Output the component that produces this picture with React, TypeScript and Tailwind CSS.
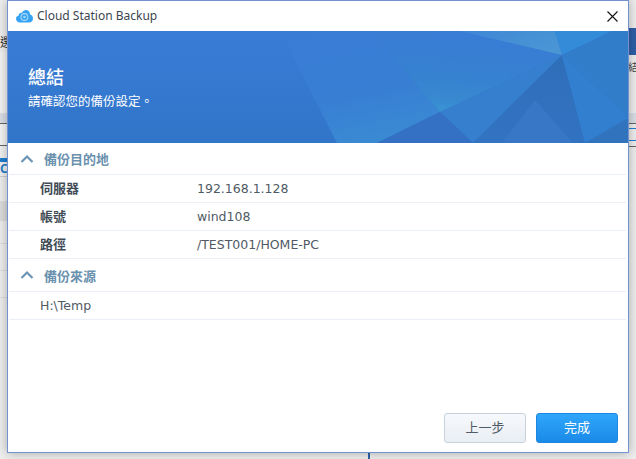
import React from 'react';

const cjk = '"Noto Sans", "Noto Sans CJK TC", sans-serif';
const mono = '"DejaVu Sans", "Noto Sans CJK TC", sans-serif';

const Chevron = () => (
    <svg width="14" height="10" viewBox="0 0 14 10" className="shrink-0" fill="none" stroke="#6c95b5" strokeWidth="2.2">
        <path d="M1.5 8 L7 2.5 L12.5 8" />
    </svg>
);

const CloudIcon = () => (
    <svg width="17" height="14" viewBox="0 0 17 14" className="shrink-0">
        <path d="M4 13.5 C1.5 13.5 0 11.8 0 9.8 C0 8 1.2 6.8 2.6 6.5 C2.8 4.4 4.4 3.4 6 3.8 C7 1.8 8.6 0.8 10.4 1 C12.6 1.3 14 3 14 5.2 C15.8 5.8 17 7.4 17 9.4 C17 11.8 15.2 13.5 13 13.5 Z" fill="#35a3f2" />
        <circle cx="8.4" cy="8" r="3.4" fill="none" stroke="#a5d8fa" strokeWidth="1.1" />
        <circle cx="8.4" cy="8" r="1.3" fill="#a5d8fa" />
    </svg>
);

const Banner = () => (
    <svg className="absolute inset-0 blur-[0.5px]" width="620" height="112" viewBox="8 31 620 112" preserveAspectRatio="none">
        <defs>
            <linearGradient id="base" x1="0" y1="0" x2="0" y2="1">
                <stop offset="0" stopColor="#397cd7" />
                <stop offset="1" stopColor="#3175c9" />
            </linearGradient>
            <linearGradient id="mid" x1="0.25" y1="0" x2="0.55" y2="1">
                <stop offset="0" stopColor="#397cd6" />
                <stop offset="0.6" stopColor="#387fd4" />
                <stop offset="1" stopColor="#3a8ad2" />
            </linearGradient>
            <linearGradient id="glow" x1="0.45" y1="0" x2="0.3" y2="1">
                <stop offset="0" stopColor="#397cd6" />
                <stop offset="0.6" stopColor="#3782d0" />
                <stop offset="0.85" stopColor="#388ad0" />
                <stop offset="1" stopColor="#3a96d3" />
            </linearGradient>
            <linearGradient id="top" x1="0" y1="0" x2="1" y2="0.6">
                <stop offset="0" stopColor="#3f86d6" />
                <stop offset="1" stopColor="#4a96d4" />
            </linearGradient>
            <linearGradient id="dark" x1="0.6" y1="0" x2="0.4" y2="1">
                <stop offset="0" stopColor="#2f6eb9" />
                <stop offset="1" stopColor="#3273c2" />
            </linearGradient>
        </defs>
        <rect x="8" y="31" width="620" height="112" fill="url(#base)" />
        <polygon points="280,31 370,31 440,112 377,143 337,143" fill="url(#mid)" />
        <polygon points="370,31 460,31 562,55 440,112" fill="url(#glow)" />
        <polygon points="460,31 555,31 562,55" fill="url(#top)" />
        <polygon points="555,31 612,31 562,55" fill="#348bd8" />
        <polygon points="612,31 628,31 628,118 562,55" fill="#317dca" />
        <polygon points="562,55 440,112 473,143" fill="#367fce" />
        <polygon points="440,112 473,143 377,143" fill="#3470c4" />
        <polygon points="562,55 473,143 585,143" fill="url(#dark)" />
        <polygon points="535,100 573,143 502,143" fill="#3877c5" />
        <polygon points="562,55 628,118 585,143" fill="#327fcf" />
        <polygon points="628,118 628,143 585,143" fill="#3174bd" />
    </svg>
);

const Row = ({ label, value }: { label: string; value: string }) => (
    <div className="flex items-center h-[28px] pl-[31px] border-b border-[#e9eff4] ml-[1px] mr-[2px]">
        <span className="w-[157px] text-[13px] font-bold text-[#414b55]">{label}</span>
        <span className="text-[12.5px] text-[#505a64] pt-[2px]" style={{ fontFamily: mono }}>{value}</span>
    </div>
);

const Section = ({ title, tall }: { title: string; tall?: boolean }) => (
    <div className={tall ? 'flex items-center h-[33px] pl-[11px] gap-[10px] border-b border-[#e9eff4] ml-[1px] mr-[2px]' : 'flex items-center h-[32px] pl-[11px] gap-[10px] border-b border-[#e9eff4] ml-[1px] mr-[2px]'}>
        <Chevron />
        <span className="text-[13px] font-bold text-[#6a91ad] pt-[3px]">{title}</span>
    </div>
);

export default function App() {
    return (
        <div className="relative w-[636px] h-[459px] overflow-hidden bg-[#eeeeee]" style={{ fontFamily: cjk }}>
            {/* desktop behind the dialog */}
            <div className="flex justify-between h-full">
                <div className="w-[7px] flex flex-col text-[12px] text-[#333] overflow-hidden">
                    <div className="h-[34px] bg-[#efefef]" />
                    <div className="h-[18px] leading-[18px] whitespace-nowrap">選</div>
                    <div className="h-[61px] bg-[#f3f3f3]" />
                    <div className="h-[10px] bg-[#d9dee6]" />
                    <div className="h-[1px] bg-[#666]" />
                    <div className="h-[21px] bg-[#f4f4f4]" />
                    <div className="h-[1px] bg-[#666]" />
                    <div className="h-[12px] bg-[#f1f1f1]" />
                    <div className="h-[4px] bg-[#1f7fd0]" />
                    <div className="h-[14px] leading-[14px] text-[#2a7fc8] font-bold bg-[#f1f1f1]">C</div>
                    <div className="h-[1px] bg-[#cfcfcf]" />
                    <div className="h-[24px]" />
                    <div className="h-[20px] bg-[#dcdcdc]" />
                    <div className="h-[22px]" />
                    <div className="h-[1px] bg-[#dcdcdc]" />
                    <div className="h-[26px]" />
                    <div className="h-[1px] bg-[#dcdcdc]" />
                    <div className="h-[26px]" />
                    <div className="h-[1px] bg-[#dcdcdc]" />
                </div>
                <div className="w-[8px] flex flex-col text-[10px] text-[#444] overflow-hidden">
                    <div className="h-[28px]" />
                    <div className="h-[27px] bg-[#2f5fa8]" />
                    <div className="h-[6px]" />
                    <div className="h-[12px] leading-[12px] whitespace-nowrap">結</div>
                    <div className="h-[40px]" />
                    <div className="h-[10px] bg-[#d9dee6]" />
                    <div className="h-[1px] bg-[#666]" />
                    <div className="h-[4px]" />
                    <div className="h-[1px] bg-[#1f7fd0]" />
                    <div className="h-[11px]" />
                    <div className="h-[1px] bg-[#1f7fd0]" />
                    <div className="h-[5px]" />
                    <div className="h-[1px] bg-[#666]" />
                </div>
            </div>
            <div className="absolute bottom-0 left-[368px] w-[2px] h-[8px] bg-[#2a65a8]" />

            {/* dialog */}
            <div className="absolute left-[7px] top-0 w-[622px] h-[453px] flex flex-col bg-white border border-[#7492cf] shadow-[0_0_10px_rgba(0,0,0,0.3)]">
                <div className="flex items-center h-[30px] pl-[8px] pr-[10px] gap-[4px] shrink-0">
                    <CloudIcon />
                    <span className="grow text-[12px] text-[#3c4650]">Cloud Station Backup</span>
                    <svg width="11" height="11" viewBox="0 0 11 11" stroke="#111" strokeWidth="1.1">
                        <path d="M0.5 0.5 L10.5 10.5 M10.5 0.5 L0.5 10.5" />
                    </svg>
                </div>
                <div className="relative h-[112px] shrink-0 overflow-hidden">
                    <Banner />
                    <div className="relative pl-[20px] pt-[33px] text-white">
                        <div className="text-[18px] leading-[27px] font-medium">總結</div>
                        <div className="text-[12.5px] leading-[18px] pt-[2px]">請確認您的備份設定。</div>
                    </div>
                </div>
                <Section title="備份目的地" />
                <Row label="伺服器" value="192.168.1.128" />
                <Row label="帳號" value="wind108" />
                <Row label="路徑" value="/TEST001/HOME-PC" />
                <Section title="備份來源" tall />
                <div className="flex items-center h-[28px] pl-[31px] border-b border-[#e9eff4] ml-[1px] mr-[2px]">
                    <span className="text-[12.5px] text-[#505a64] pt-[2px]" style={{ fontFamily: mono }}>H:\Temp</span>
                </div>
                <div className="grow" />
                <div className="flex justify-end gap-[10px] pr-[10px] pb-[9px]">
                    <button className="w-[82px] h-[30px] rounded-[3px] border border-[#c8d2dc] bg-gradient-to-b from-[#f6f9fc] to-[#e9eef4] text-[13px] text-[#505a64]">上一步</button>
                    <button className="w-[82px] h-[30px] rounded-[3px] border border-[#1b87e0] bg-gradient-to-b from-[#30a6fb] to-[#1a8ae8] text-[13px] text-white">完成</button>
                </div>
            </div>
        </div>
    );
}
